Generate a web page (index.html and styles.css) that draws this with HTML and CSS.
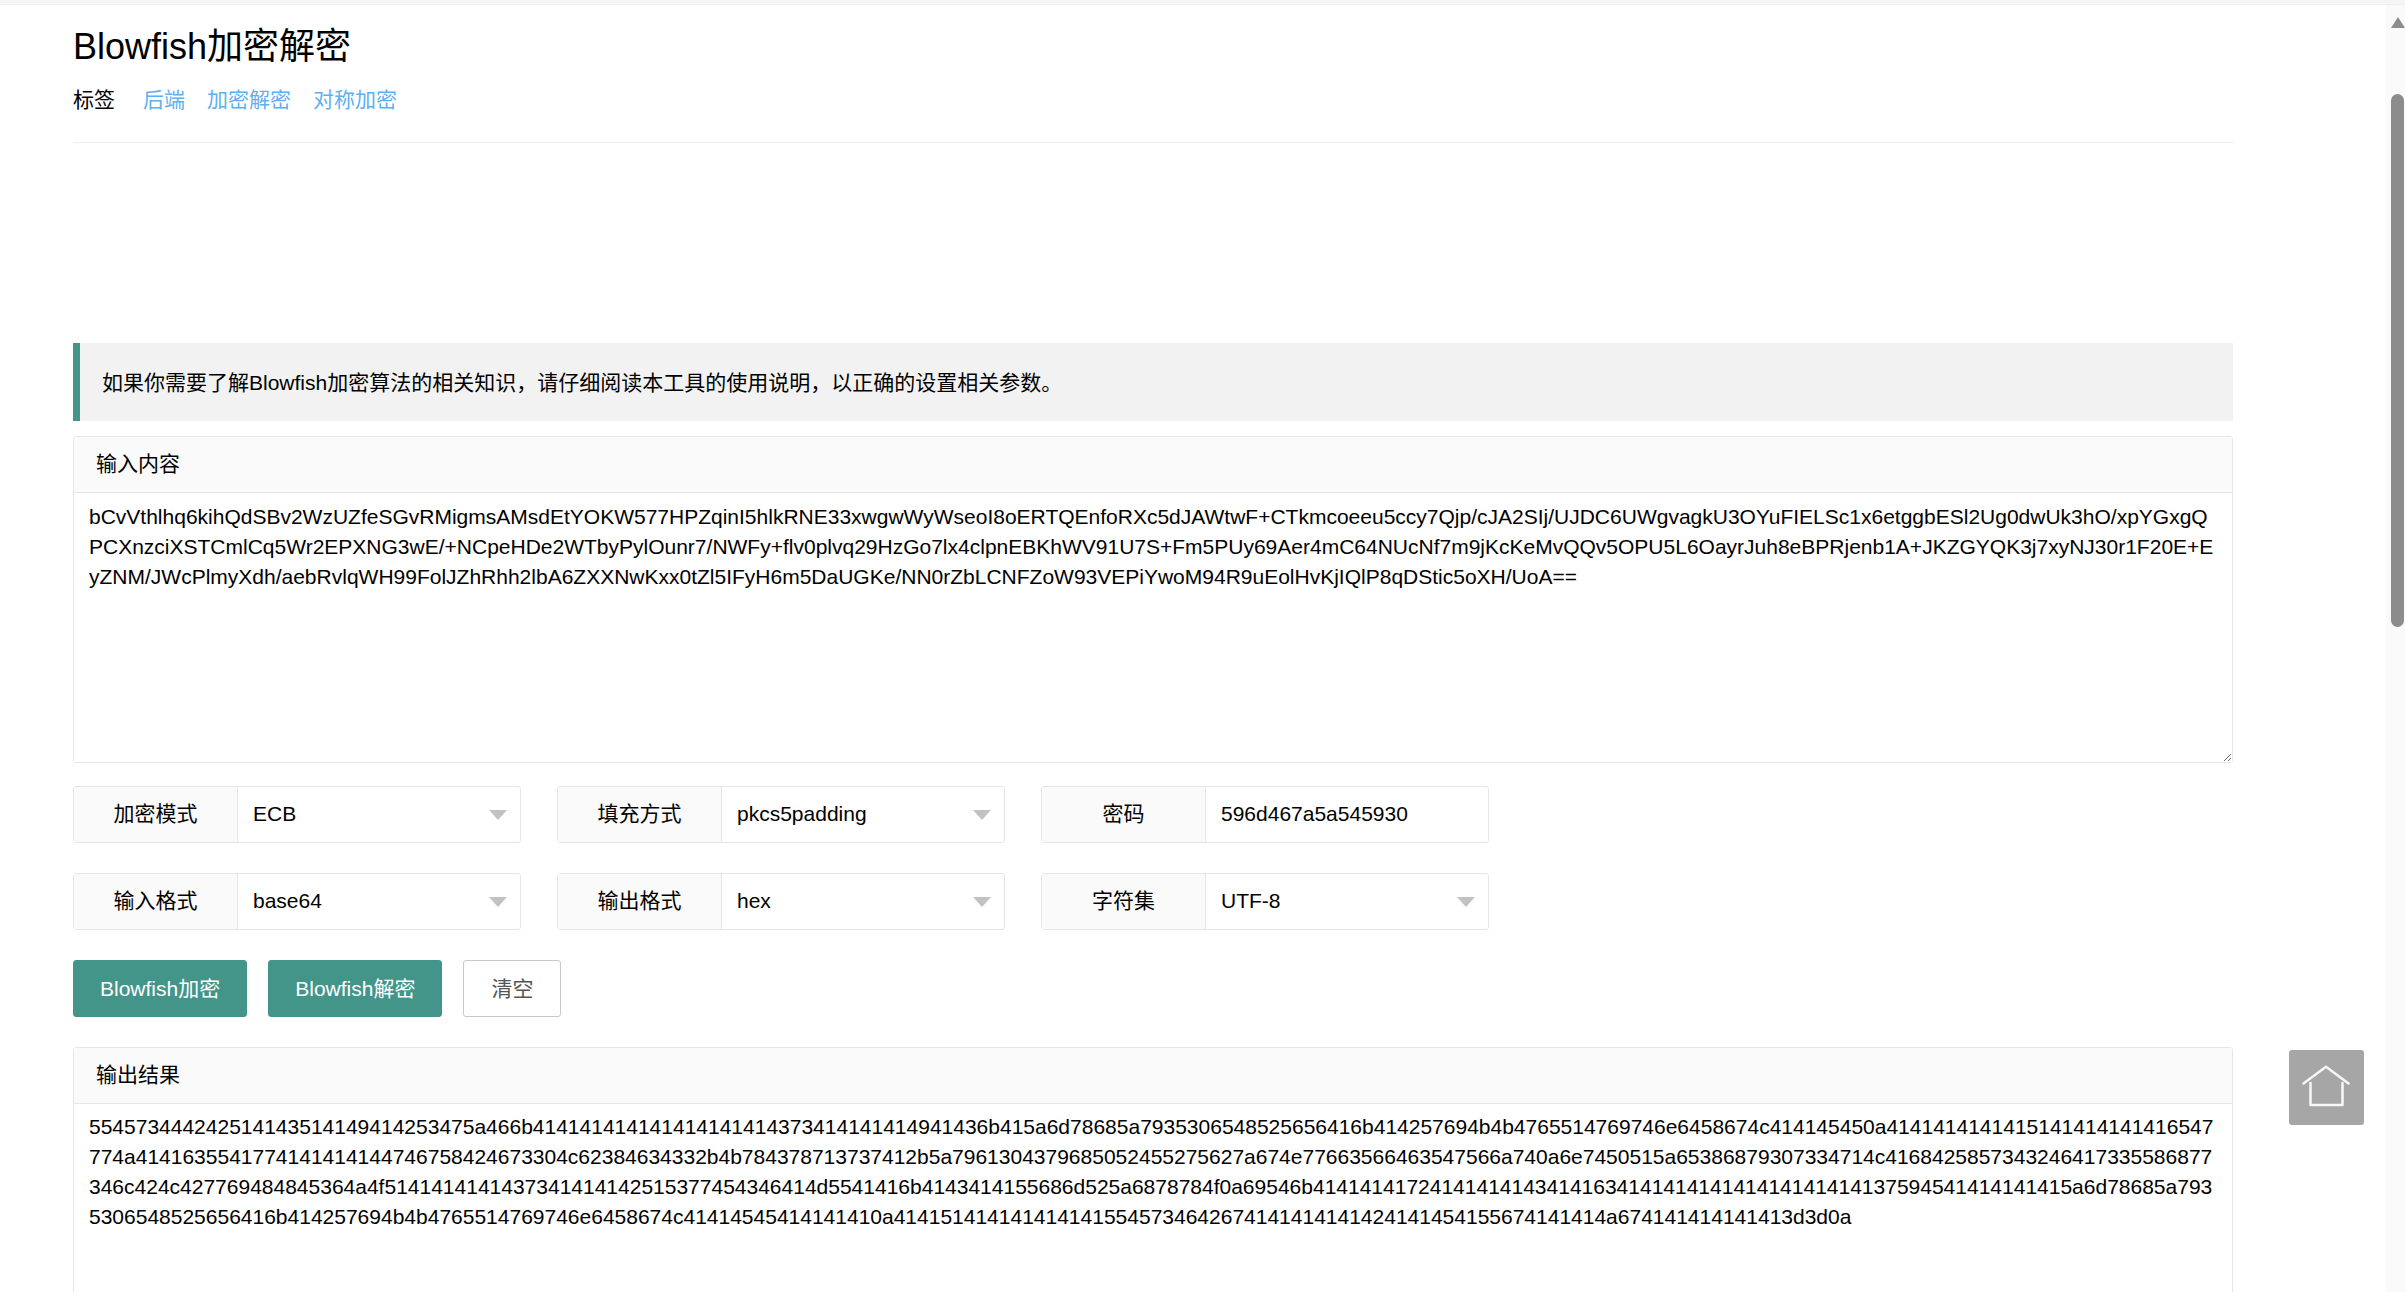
FILE: index.html
```html
<!DOCTYPE html>
<html>
<head>
    <meta charset="UTF-8">
    <title>Blowfish加密解密</title>
    <link rel="stylesheet" href="styles.css">
</head>

<body>
    <div class="topstrip"></div>

    <div class="container">
        <h1>Blowfish加密解密</h1>
        <div class="tags">
            <span class="tags-label">标签</span>
            <a href="#">后端</a>
            <a href="#">加密解密</a>
            <a href="#">对称加密</a>
        </div>
        <div class="ad-space"></div>

        <blockquote class="quote">如果你需要了解Blowfish加密算法的相关知识，请仔细阅读本工具的使用说明，以正确的设置相关参数。</blockquote>

        <div class="card">
            <div class="card-header">输入内容</div>
            <textarea class="input-text" wrap="off" spellcheck="false">bCvVthlhq6kihQdSBv2WzUZfeSGvRMigmsAMsdEtYOKW577HPZqinI5hlkRNE33xwgwWyWseoI8oERTQEnfoRXc5dJAWtwF+CTkmcoeeu5ccy7Qjp/cJA2SIj/UJDC6UWgvagkU3OYuFIELSc1x6etggbESl2Ug0dwUk3hO/xpYGxgQ
PCXnzciXSTCmlCq5Wr2EPXNG3wE/+NCpeHDe2WTbyPylOunr7/NWFy+flv0plvq29HzGo7lx4clpnEBKhWV91U7S+Fm5PUy69Aer4mC64NUcNf7m9jKcKeMvQQv5OPU5L6OayrJuh8eBPRjenb1A+JKZGYQK3j7xyNJ30r1F20E+E
yZNM/JWcPlmyXdh/aebRvlqWH99FolJZhRhh2lbA6ZXXNwKxx0tZl5IFyH6m5DaUGKe/NN0rZbLCNFZoW93VEPiYwoM94R9uEolHvKjIQlP8qDStic5oXH/UoA==</textarea>
        </div>

        <div class="form-row">
            <div class="field">
                <label class="field-label">加密模式</label>
                <div class="field-value select">ECB</div>
            </div>
            <div class="field">
                <label class="field-label">填充方式</label>
                <div class="field-value select">pkcs5padding</div>
            </div>
            <div class="field">
                <label class="field-label">密码</label>
                <div class="field-value">596d467a5a545930</div>
            </div>
        </div>

        <div class="form-row">
            <div class="field">
                <label class="field-label">输入格式</label>
                <div class="field-value select">base64</div>
            </div>
            <div class="field">
                <label class="field-label">输出格式</label>
                <div class="field-value select">hex</div>
            </div>
            <div class="field">
                <label class="field-label">字符集</label>
                <div class="field-value select">UTF-8</div>
            </div>
        </div>

        <div class="buttons">
            <button class="btn">Blowfish加密</button>
            <button class="btn">Blowfish解密</button>
            <button class="btn btn-plain">清空</button>
        </div>

        <div class="card card-output">
            <div class="card-header">输出结果</div>
            <div class="output-text">554573444242514143514149414253475a466b414141414141414141414373414141414941436b415a6d78685a7935306548525656416b414257694b4b4765514769746e6458674c414145450a4141414141415141414141416547
774a4141635541774141414144746758424673304c62384634332b4b784378713737412b5a7961304379685052455275627a674e77663566463547566a740a6e7450515a65386879307334714c4168425857343246417335586877
346c424c427769484845364a4f5141414141437341414142515377454346414d5541416b4143414155686d525a6878784f0a69546b41414141724141414143414163414141414141414141414137594541414141415a6d78685a793
5306548525656416b414257694b4b4765514769746e6458674c41414545414141410a4141514141414141415545734642674141414141424141454155674141414a674141414141413d3d0a</div>
        </div>
    </div>

    <a class="home-btn" href="#">
        <svg width="75" height="75" viewBox="0 0 75 75" fill="none" stroke="#f7f7f7" stroke-width="2.5" stroke-linecap="round" stroke-linejoin="round">
            <path d="M14.5 33.5 L37 16.7 L59.5 33.5"/>
            <path d="M21.5 33 V55 H53.5 V33"/>
        </svg>
    </a>

    <div class="scrollbar">
        <div class="scroll-up"></div>
        <div class="scroll-thumb"></div>
    </div>
</body>
</html>
```

FILE: styles.css
```css
html, body {
    height: 100%;
    overflow: hidden;
}

body {
    margin: 0;
    background-color: #fff;
    color: #000;
    font-family: "Liberation Sans", "Noto Sans CJK SC", sans-serif;
    font-size: 21px;
    line-height: 30px;
}

.topstrip {
    height: 4px;
    background-color: #f5f5f5;
    border-bottom: 1px solid #eee;
}

.container {
    width: 2160px;
    margin-left: 73px;
}

h1 {
    margin: 15px 0 0;
    font-size: 36px;
    font-weight: 400;
    line-height: 54px;
}

.tags {
    display: flex;
    gap: 22px;
    margin-top: 11px;
    padding-bottom: 27px;
    border-bottom: 1px solid #eee;
    white-space: nowrap;
}

.tags-label {
    margin-right: 6px;
}

.tags a {
    color: #5fb0ef;
    text-decoration: none;
}

.ad-space {
    height: 200px;
}

.quote {
    margin: 0;
    padding: 25px 24px 23px 22px;
    background-color: #f2f2f2;
    border-left: 7px solid #43958a;
}

.card {
    margin-top: 15px;
    border: 1px solid #e6e6e6;
    border-radius: 3px;
}

.card-header {
    height: 55px;
    padding-left: 22px;
    background-color: #fafafa;
    border-bottom: 1px solid #e6e6e6;
    line-height: 54px;
}

.input-text {
    display: block;
    box-sizing: border-box;
    width: 100%;
    height: 269px;
    padding: 9px 15px;
    border: 0;
    outline: 0;
    color: #000;
    font-family: inherit;
    font-size: 21px;
    line-height: 30px;
    overflow: hidden;
    white-space: pre;
}

.form-row {
    display: flex;
    gap: 36px;
    margin-top: 30px;
}

.card + .form-row {
    margin-top: 23px;
}

.field {
    display: flex;
    box-sizing: border-box;
    width: 448px;
    height: 57px;
    border: 1px solid #e6e6e6;
    border-radius: 3px;
    line-height: 53px;
}

.field-label {
    width: 163px;
    background-color: #fafafa;
    border-right: 1px solid #e6e6e6;
    text-align: center;
}

.field-value {
    flex: 1;
    position: relative;
    padding-left: 15px;
}

.select::after {
    content: "";
    position: absolute;
    top: 23px;
    right: 13px;
    border-top: 10px solid #c2c2c2;
    border-left: 9px solid transparent;
    border-right: 9px solid transparent;
}

.buttons {
    display: flex;
    gap: 21px;
    margin-top: 30px;
}

.btn {
    box-sizing: border-box;
    height: 57px;
    padding: 0 26px 3px;
    background-color: #43958a;
    border: 1px solid #43958a;
    border-radius: 3px;
    color: #fff;
    font-family: inherit;
    font-size: 21px;
}

.btn-plain {
    padding: 0 27px 3px;
    background-color: #fff;
    border-color: #c9c9c9;
    color: #555;
}

.card-output {
    margin-top: 30px;
}

.output-text {
    height: 320px;
    padding: 8px 15px;
    white-space: pre;
    overflow: hidden;
}

.home-btn {
    position: fixed;
    left: 2289px;
    top: 1050px;
    width: 75px;
    height: 75px;
    background-color: #a6a6a6;
    border-radius: 3px;
}

.home-btn svg {
    display: block;
}

.scrollbar {
    position: fixed;
    top: 5px;
    right: 0;
    bottom: 0;
    width: 19px;
    background-color: #fafafa;
}

.scroll-up {
    position: absolute;
    top: 12px;
    right: 0;
    border-bottom: 11px solid #8c8c8c;
    border-left: 7px solid transparent;
    border-right: 7px solid transparent;
}

.scroll-thumb {
    position: absolute;
    top: 89px;
    right: 1px;
    width: 13px;
    height: 533px;
    background-color: #8c8c8c;
    border-radius: 7px;
}
```
